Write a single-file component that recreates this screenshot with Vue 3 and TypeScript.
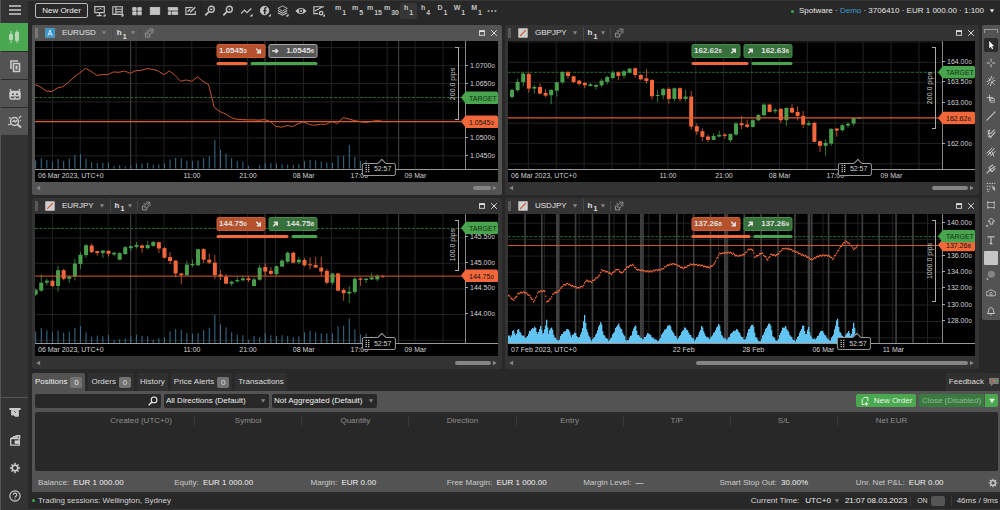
<script setup lang="ts">
import { ref } from 'vue'

type Candle = [string, number, number, number, number]
interface Mark { at: number; text: string }
interface Chart {
  symbol: string
  active?: boolean
  width: number
  top: number
  bottom: number
  start: number
  line?: number[]
  candles?: Candle[]
  volume?: number[]
  dots?: [number, number][]
  area?: [number, number][]
  gridX: number[]
  daysX: number[]
  wideX: number[]
  gridY: number[]
  prices: Mark[]
  times: Mark[]
  target: number
  last: number
  lastText: string
  pips: string
  pipsFrom: number
  pipsTo: number
  clock: number
  bid: string
  ask: string
  bidTone: string
  askTone: string
  bidIcon: string
  askIcon: string
  share: number
  thumbFrom: number
}

/* Plot units: three per pixel at the default window size. */
const STEP = 16.8

const icons: Record<string, string> = {
  menu: '<path d="M1 3h12M1 7h12M1 11h12" stroke-width="1.4"/>',
  candles: '<path d="M4 1v12M10 0v13" stroke-width="1"/><rect x="2" y="4" width="4" height="6" rx="1" fill="currentColor" stroke="none"/><rect x="8" y="2" width="4" height="9" rx="1" fill="currentColor" stroke="none"/>',
  copy: '<path d="M3 10V2h7" stroke-width="1.6"/><path d="M5.500 4.500h6v8h-6z" stroke-width="1.6"/><path d="M8.500 6.500v4" stroke-width="2"/>',
  bot: '<rect x="2" y="4.500" width="10" height="7.500" rx="1.5" stroke-width="1.5"/><path d="M2 5h10v4.500H2z" fill="currentColor" stroke="none"/><path d="M3 4L2 2M11 4l1-2M6 10.800h2" stroke-width="1.3"/><path d="M4 7.300h2M8 7.300h2" stroke="#535353" stroke-width="1.5"/>',
  analyze: '<circle cx="6.500" cy="6.500" r="4" stroke-width="1.500"/><path d="M9.500 9.500l3.500 3" stroke-width="2"/><path d="M0 10l3-1M4.500 7l1.500-1.500L7.500 7 9 5M11 3l2-2M1 3h1.500" stroke-width="1.300"/><path d="M12.500 5v1"/>',
  atm: '<path d="M0.500 3.500h13" stroke-width="2.400"/><path d="M3 5h8v7H7l-1-1.500H3z" fill="currentColor"/><path d="M6 6l2 2" stroke="#333"/>',
  wallet: '<path d="M2.500 5L9 2h3.500v3M2 5.500h10V13H2z" stroke-width="1.5"/><path d="M7 8h5v3H7z" fill="currentColor"/><path d="M5 3.500h6" stroke-width="2"/>',
  gear: '<circle cx="7" cy="7" r="3.200" stroke-width="1.800"/><path d="M7 1v2.500M7 10.500V13M1 7h2.500M10.500 7H13M2.800 2.800l1.700 1.700M9.500 9.500l1.700 1.700M2.800 11.200l1.700-1.700M9.500 4.500l1.700-1.700" stroke-width="1.700"/>',
  help: '<circle cx="7" cy="7" r="6" stroke-width="1.300"/><path d="M5 5.600a2 2 0 1 1 2.700 1.900c-.6.3-.7.600-.7 1.300M7 10v1.200" stroke-width="1.300"/>',
  monitor: '<path d="M1 2h11v7H1zM6.500 9v3M3 12.500h6" stroke-width="1.400"/><path d="M3 6l5-2 2 2"/><path d="M13 11v2h-2z" fill="currentColor"/>',
  list: '<path d="M1 2h11v9H1zM4.500 2v9M4.500 5H12M4.500 8H12" stroke-width="1.300"/><path d="M13 11v2h-2z" fill="currentColor"/>',
  four: '<path d="M2 3h4v3.500H2zM8 3h4v3.500H8zM2 8h4v3.500H2zM8 8h4v3.500H8z" fill="currentColor"/>',
  one: '<rect x="1.500" y="3" width="11" height="8" fill="currentColor"/>',
  three: '<path d="M1.500 3h11v3h-11zM1.500 8h3v3h-3zM6 8h6.500v3H6z" fill="currentColor"/>',
  edit: '<path d="M9 3H1v8h11V7" stroke-width="1.300"/><path d="M6 8.500l6-6M3 8l3-3" stroke-width="1.700"/>',
  zoomOut: '<circle cx="8.500" cy="5" r="3.500" stroke-width="1.600"/><path d="M5.500 8L1.500 12" stroke-width="2"/><path d="M7 5h3" stroke-width="1.500"/>',
  zoomIn: '<circle cx="8.500" cy="5" r="3.500" stroke-width="1.600"/><path d="M5.500 8L1.500 12" stroke-width="2"/><path d="M8.500 4v2" stroke-width="1.200"/>',
  trend: '<path d="M0 10l4-4 3 3 5-5" stroke-width="1.500"/><path d="M13 11v2h-2z" fill="currentColor"/>',
  fx: '<circle cx="6.500" cy="6.500" r="5" fill="currentColor"/><path d="M9 3.500c-2-1-2.300.500-2.300 2v5M5 6.500h4" stroke="#282828" stroke-width="1.600"/><path d="M13.500 11v2h-2z" fill="currentColor"/>',
  layers: '<path d="M6.500 1L12 4 6.500 7 1 4z"/><path d="M1 6.500l5.500 3 5.500-3M1 9l5.500 3L12 9" stroke-width="1.200"/><path d="M13 11v2h-2z" fill="currentColor"/>',
  eye: '<path d="M1 7c3-4 9-4 12 0-3 4-9 4-12 0z" fill="currentColor"/><circle cx="7" cy="7" r="1.900" fill="none" stroke="#282828" stroke-width="1.300"/>',
  screenGear: '<path d="M12 3V2H1v8h5M2 7l4-2 5-3" stroke-width="1.300"/><circle cx="9.500" cy="9.500" r="2" stroke-width="1.600"/><path d="M14 11v2h-2z" fill="currentColor"/>',
  more: '<path d="M2 6h2v2H2zM6 6h2v2H6zM10 6h2v2h-2z" fill="currentColor" stroke="none"/>',
  autochart: '<rect x="1" y="1" width="12" height="12" fill="#3b93c4" stroke="#55b4e8"/><path d="M4 11l3-8 3 8M5 8.500h4" stroke="#dff2ff" stroke-width="1.300"/>',
  chartType: '<rect x="1" y="1" width="12" height="12" fill="#cfcfcf" stroke="#cfcfcf"/><path d="M3 11l8-8" stroke="#d0532b" stroke-width="1.600"/>',
  link: '<path d="M6 4H3.500M2 7v5.500h6V9M2 7h3" stroke-width="1.300"/><circle cx="8" cy="6.500" r="2.500"/><path d="M7 1.500h5.500v6M10 4l2-2" stroke-width="1.200"/><path d="M4 8l2 2"/>',
  max: '<rect x="2.500" y="3" width="9" height="8" stroke-width="1.500"/><path d="M2.500 4h9" stroke-width="2.500"/>',
  close: '<path d="M2 2l10 10M12 2L2 12" stroke-width="1.600"/>',
  search: '<circle cx="8.500" cy="5.500" r="4" stroke-width="1.500"/><path d="M5.500 8.500L1 13" stroke-width="1.800"/>',
  order: '<path d="M6 12H3V5l3-3h5v5" stroke-width="1.400"/><path d="M9 8.500v5M6.500 11h5" stroke-width="1.600"/>',
  chat: '<path d="M1 2h12v7H6l-3 3V9H1z" fill="#777" stroke="#999"/><path d="M3 5.500h2" stroke="#e04a2a" stroke-width="2.400"/><path d="M6 5.500h2" stroke="#e8883a" stroke-width="2.400"/><path d="M9.500 5.500h2" stroke="#3fae49" stroke-width="2.400"/>',
  up: '<path d="M3 11l6-6M4 4h6v6" stroke-width="2.600"/>',
  down: '<path d="M3 3l6 6M10 4v6H4" stroke-width="2.600"/>',
  flat: '<path d="M1 7h9M7 3.500L11 7l-4 3.500" stroke-width="2.400"/>',
  cursor: '<path d="M4.500 1.500v10l2.300-2 1.700 3.500 1.500-.8-1.600-3.400h3z" fill="currentColor" stroke="none"/>',
  cross: '<path d="M7 1v4.500M7 8.500V13M1 7h4.500M8.500 7H13" stroke-width="1.300"/>',
  crossAxes: '<path d="M8 0L6 6 1 8M6 14l2-6 5-2M3 3l3 3M8 8l4 4M2 12l3-3M9 5l2-3" stroke-width="1.300"/>',
  crossBox: '<path d="M5 1v9M1 5h9" stroke-width="1.300"/><rect x="6.500" y="6.500" width="5" height="5"/><path d="M7 9h4"/>',
  slash: '<path d="M1 13L13 1" stroke-width="1.600"/>',
  channel: '<path d="M2 3l3-1-2 5 4-1 5-5M3 11l2-2 1 3 7-8" stroke-width="1.500"/>',
  fib: '<path d="M1 9l8-8M2 12L12 2M6 13l7-7M8 6l3 7M4 6l3 5" stroke-width="1.400"/>',
  pitch: '<path d="M1 13l6-6M4 5l6-4M6 8l7-5M8 11l5-5M4 5l4 6" stroke-width="1.500"/>',
  gridTool: '<path d="M1 2h12M1 6h9M1 10h5M2 13h3" stroke-dasharray="2 1.500" stroke-width="1.400"/><path d="M9 8l3 4V7z" fill="currentColor"/>',
  rect: '<rect x="2.500" y="3.500" width="9" height="7"/><path d="M1.500 3h2M10.500 3h2M1.500 11h2M10.500 11h2" stroke-width="2"/>',
  arrow: '<path d="M7.500 1.500L12 6H9.500v4h-4V6H3z" stroke-width="1.300"/><path d="M1 11v2h2z" fill="currentColor"/>',
  text: '<path d="M3 4V2.500h8V4M7 2.500v9M5 12h4" stroke-width="1.600"/>',
  swatch: '<rect x="0" y="0" width="14" height="14" rx="1" fill="#c6c6c6" stroke="none"/>',
  disc: '<circle cx="7.500" cy="6" r="5" fill="#858585" stroke="none"/><path d="M1 10.500v3h3z" fill="#bbb" stroke="none"/>',
  cloudEye: '<path d="M3 11a3 3 0 0 1 0-6c1-3 7-3 8 0a3 3 0 0 1 0 6z" stroke-width="1.300"/><circle cx="7" cy="8" r="1.800"/>',
  bell: '<path d="M2 10.500c2-1.500 1-6 3-7.500 1-1 3-1 4 0 2 1.500 1 6 3 7.500zM6 12.500h2" stroke-width="1.400"/>',
  caret: '<path d="M2 3h10l-5 8z" fill="currentColor" stroke="none"/>',
}

const every = (from: number, count: number, gap: number) =>
  Array.from({ length: count }, (_, i) => from + i * gap)

const gbpCandles: Candle[] = [
  ['u', 267, 270, 291, 296], ['u', 236, 246, 271, 275], ['u', 217, 221, 246, 259], ['d', 217, 222, 266, 278],
  ['u', 255, 261, 266, 281], ['d', 250, 261, 281, 284], ['d', 268, 279, 287, 292], ['u', 268, 270, 286, 313],
  ['u', 246, 247, 272, 290], ['u', 213, 216, 247, 252], ['d', 213, 217, 228, 236], ['d', 228, 229, 246, 250],
  ['d', 240, 242, 252, 257], ['d', 246, 249, 256, 265], ['u', 249, 253, 258, 260], ['u', 253, 255, 260, 269],
  ['u', 236, 242, 256, 262], ['u', 227, 231, 246, 254], ['u', 212, 218, 234, 238], ['d', 214, 217, 228, 241],
  ['u', 209, 214, 227, 236], ['u', 204, 206, 218, 221], ['d', 203, 205, 225, 233], ['d', 222, 225, 238, 241],
  ['d', 207, 235, 243, 251], ['d', 238, 240, 289, 299], ['u', 271, 285, 288, 307], ['u', 264, 267, 286, 298],
  ['d', 262, 267, 297, 311], ['u', 263, 265, 297, 304], ['d', 262, 265, 297, 305], ['u', 269, 290, 297, 305],
  ['d', 273, 290, 380, 389], ['d', 371, 379, 395, 405], ['d', 386, 394, 411, 424], ['d', 404, 410, 420, 427],
  ['u', 400, 408, 420, 421], ['u', 392, 405, 410, 412], ['d', 400, 404, 408, 416], ['u', 401, 402, 421, 427],
  ['u', 366, 371, 404, 408], ['d', 348, 370, 376, 388], ['d', 359, 374, 381, 384], ['u', 358, 361, 381, 383],
  ['u', 342, 345, 361, 364], ['u', 310, 314, 346, 349], ['d', 311, 314, 336, 338], ['u', 325, 330, 334, 341],
  ['d', 325, 327, 361, 369], ['u', 322, 324, 361, 379], ['d', 313, 324, 338, 341], ['d', 319, 336, 348, 362],
  ['d', 333, 348, 374, 384], ['u', 362, 370, 375, 378], ['d', 365, 369, 426, 427], ['d', 422, 424, 438, 456],
  ['u', 419, 429, 438, 468], ['u', 385, 387, 431, 438], ['d', 385, 386, 392, 410], ['u', 373, 376, 391, 395],
  ['u', 366, 372, 377, 383], ['u', 352, 355, 371, 378], ['u', 353, 354, 356, 357],
]

const eurjpyCandles: Candle[] = [
  ['u', 297, 301, 315, 320], ['u', 254, 279, 303, 307], ['u', 267, 273, 279, 287], ['d', 269, 273, 289, 292],
  ['u', 227, 241, 289, 306], ['d', 237, 241, 267, 272], ['u', 258, 261, 267, 280], ['u', 206, 221, 260, 272],
  ['u', 185, 194, 222, 238], ['u', 162, 165, 195, 203], ['d', 160, 166, 186, 189], ['d', 182, 183, 189, 197],
  ['u', 180, 181, 189, 204], ['d', 180, 182, 191, 200], ['u', 185, 188, 193, 198], ['u', 186, 189, 209, 211],
  ['u', 167, 171, 192, 194], ['u', 165, 168, 174, 182], ['u', 155, 164, 170, 175], ['d', 162, 166, 173, 188],
  ['u', 152, 164, 174, 178], ['u', 153, 155, 167, 170], ['d', 154, 156, 175, 189], ['d', 171, 174, 203, 205],
  ['d', 186, 201, 213, 222], ['d', 210, 212, 251, 263], ['d', 249, 251, 256, 284], ['u', 212, 224, 256, 258],
  ['u', 208, 222, 226, 231], ['u', 176, 177, 226, 227], ['d', 174, 177, 209, 219], ['d', 191, 209, 218, 222],
  ['d', 195, 218, 256, 268], ['d', 241, 254, 260, 271], ['d', 253, 261, 282, 284], ['u', 273, 276, 282, 290],
  ['u', 261, 271, 275, 279], ['u', 257, 266, 272, 273], ['d', 260, 266, 271, 277], ['u', 263, 269, 289, 291],
  ['u', 225, 233, 270, 273], ['d', 220, 231, 245, 258], ['d', 232, 243, 252, 256], ['u', 226, 229, 253, 258],
  ['u', 207, 212, 230, 231], ['u', 184, 188, 215, 219], ['d', 184, 188, 218, 220], ['u', 201, 209, 217, 222],
  ['d', 204, 210, 226, 230], ['d', 202, 223, 226, 239], ['d', 201, 225, 233, 234], ['d', 200, 233, 245, 258],
  ['d', 237, 243, 279, 284], ['u', 249, 251, 279, 286], ['d', 249, 251, 303, 306], ['d', 296, 301, 311, 334],
  ['u', 289, 306, 312, 341], ['u', 262, 267, 307, 313], ['d', 263, 266, 270, 289], ['u', 264, 267, 271, 280],
  ['u', 249, 263, 269, 271], ['u', 253, 258, 269, 275], ['d', 255, 260, 262, 265],
]

const shortTimes: Mark[] = [
  { at: 471, text: '11:00' }, { at: 639, text: '21:00' }, { at: 806, text: '08 Mar' }, { at: 973, text: '17:00' }, { at: 1141, text: '09 Mar' },
]

const charts: Chart[] = [
  {
    symbol: 'EURUSD', active: true, width: 1290, top: 123, bottom: 506, start: 0,
    line: [254, 261, 273, 275, 264, 260, 247, 231, 219, 205, 214, 226, 224, 224, 216, 217, 213, 220, 212, 211, 206, 208, 213, 224, 213, 226, 244, 240, 244, 231, 244, 254, 322, 335, 342, 353, 358, 359, 360, 360, 361, 359, 365, 379, 382, 377, 380, 371, 366, 374, 376, 373, 373, 365, 371, 353, 357, 362, 365, 368, 365, 362, 364],
    volume: [482, 475, 481, 485, 477, 484, 476, 465, 463, 477, 487, 490, 489, 488, 499, 496, 499, 496, 491, 491, 489, 495, 494, 490, 479, 474, 475, 483, 484, 482, 475, 469, 420, 450, 461, 475, 484, 486, 498, 506, 497, 490, 490, 491, 493, 495, 495, 493, 484, 480, 482, 485, 488, 489, 468, 468, 436, 471, 484, 482],
    gridX: every(52, 15, 83.700), daysX: [287, 690, 1091], wideX: [], gridY: [143, 197, 251, 306, 360, 414, 468],
    prices: [{ at: 197, text: '1.07000' }, { at: 251, text: '1.06500' }, { at: 414, text: '1.05000' }, { at: 468, text: '1.04500' }],
    times: shortTimes, target: 293, last: 365, lastText: '1.05453', pips: '200.0 pips', pipsFrom: 142, pipsTo: 360, clock: 1041,
    bid: '1.05453', ask: '1.05456', bidTone: 'sell', askTone: 'idle', bidIcon: 'down', askIcon: 'flat', share: 31, thumbFrom: 96,
  },
  {
    symbol: 'GBPJPY', width: 1302, top: 123, bottom: 506, start: 12, candles: gbpCandles,
    gridX: every(61, 15, 83.700), daysX: [], wideX: [], gridY: [126, 187, 247, 309, 370, 431, 492],
    prices: [{ at: 187, text: '164.000' }, { at: 247, text: '163.500' }, { at: 309, text: '163.000' }, { at: 431, text: '162.000' }],
    times: shortTimes.map((t) => ({ at: t.at + 9, text: t.text })), target: 217, last: 354, lastText: '162.626', pips: '200.0 pips', pipsFrom: 142, pipsTo: 386, clock: 1050,
    bid: '162.626', ask: '162.636', bidTone: 'buy', askTone: 'buy', bidIcon: 'up', askIcon: 'up', share: 57, thumbFrom: 92,
  },
  {
    symbol: 'EURJPY', width: 1290, top: 70, bottom: 464, start: 2, candles: eurjpyCandles,
    volume: [427, 417, 424, 430, 424, 431, 428, 417, 411, 430, 443, 440, 442, 438, 454, 451, 449, 441, 437, 441, 442, 453, 448, 445, 427, 420, 423, 432, 434, 432, 423, 416, 377, 406, 415, 430, 437, 439, 453, 441, 445, 432, 439, 441, 439, 441, 445, 442, 430, 425, 430, 433, 433, 433, 412, 410, 388, 421, 436, 434, 443],
    gridX: every(52, 15, 83.700), daysX: [287, 690, 1091], wideX: [], gridY: [143, 220, 298, 376, 454],
    prices: [{ at: 143, text: '145.500' }, { at: 220, text: '145.000' }, { at: 298, text: '144.500' }, { at: 376, text: '144.000' }],
    times: shortTimes, target: 114, last: 259, lastText: '144.750', pips: '100.0 pips', pipsFrom: 89, pipsTo: 244, clock: 1041,
    bid: '144.750', ask: '144.758', bidTone: 'sell', askTone: 'buy', bidIcon: 'down', askIcon: 'up', share: 72, thumbFrom: 92,
  },
  {
    symbol: 'USDJPY', width: 1302, top: 70, bottom: 464, start: 0,
    dots: [[2, 318], [16, 330], [31, 312], [51, 310], [66, 318], [78, 335], [91, 308], [111, 306], [116, 338], [128, 325], [136, 310], [151, 308], [166, 288], [179, 280], [191, 286], [211, 298], [226, 290], [234, 270], [251, 275], [273, 262], [281, 241], [296, 243], [311, 252], [328, 240], [341, 250], [356, 230], [374, 225], [386, 242], [406, 240], [431, 246], [456, 240], [476, 226], [501, 224], [526, 233], [546, 226], [581, 224], [604, 235], [616, 228], [634, 188], [646, 187], [676, 192], [686, 196], [711, 192], [721, 180], [734, 180], [740, 200], [761, 187], [779, 212], [788, 195], [806, 193], [823, 177], [846, 178], [866, 183], [881, 195], [911, 208], [926, 198], [966, 198], [974, 205], [991, 180], [1013, 154], [1026, 160], [1038, 176], [1050, 166]],
    area: [[0, 440], [10, 442], [16, 415], [22, 440], [31, 418], [40, 440], [55, 450], [66, 422], [81, 411], [90, 440], [97, 412], [106, 442], [116, 394], [122, 432], [130, 408], [140, 445], [152, 460], [160, 440], [181, 415], [190, 442], [200, 430], [212, 452], [222, 430], [230, 377], [236, 420], [250, 455], [264, 440], [279, 398], [286, 436], [304, 454], [318, 432], [331, 406], [345, 430], [356, 455], [370, 440], [382, 408], [388, 438], [404, 450], [421, 430], [436, 452], [452, 458], [466, 425], [484, 406], [496, 436], [510, 452], [522, 425], [532, 412], [546, 440], [560, 458], [572, 436], [582, 406], [592, 440], [606, 454], [620, 430], [633, 400], [642, 440], [658, 456], [674, 430], [688, 418], [700, 440], [712, 456], [722, 425], [735, 404], [742, 440], [756, 458], [772, 425], [786, 402], [794, 440], [808, 456], [823, 418], [833, 416], [846, 440], [862, 456], [876, 430], [886, 408], [894, 446], [901, 414], [910, 446], [924, 448], [941, 425], [954, 446], [966, 456], [978, 430], [988, 383], [994, 428], [1008, 452], [1021, 425], [1030, 440], [1037, 397], [1044, 440], [1056, 455]],
    gridX: every(109, 12, 104.500), daysX: every(51, 24, 50.600), wideX: [148, 400, 652, 903], gridY: [98, 148, 198, 247, 297, 347, 397, 447],
    prices: [{ at: 98, text: '140.000' }, { at: 198, text: '136.000' }, { at: 247, text: '134.000' }, { at: 297, text: '132.000' }, { at: 347, text: '130.000' }, { at: 397, text: '128.000' }],
    times: [{ at: 527, text: '22 Feb' }, { at: 736, text: '28 Feb' }, { at: 946, text: '06 Mar' }, { at: 1156, text: '11 Mar' }],
    target: 139, last: 166, lastText: '137.268', pips: '1000.0 pips', pipsFrom: 89, pipsTo: 340, clock: 1048,
    bid: '137.268', ask: '137.269', bidTone: 'sell', askTone: 'buy', bidIcon: 'down', askIcon: 'up', share: 59, thumbFrom: 40,
  },
]

const AXIS = 33
const plotX = (c: Chart, i: number) => c.start + i * STEP
const pct = (c: Chart, y: number) => ((y - c.top) / (c.bottom - c.top)) * 100 + '%'
/* The time strip spans the price axis too, so its marks skip that column. */
const pctX = (c: Chart, x: number) => `calc((100% - ${AXIS}px) * ${x / c.width})`
const linePoints = (c: Chart) => (c.line ?? []).map((y, i) => `${plotX(c, i)},${y}`).join(' ')

function sample(points: [number, number][], x: number): number {
  const k = Math.max(1, points.findIndex((p) => p[0] >= x))
  const a = points[k - 1]
  const b = points[k]
  return a[1] + ((b[1] - a[1]) * (x - a[0])) / (b[0] - a[0])
}
const wobble = (i: number) => Math.sin(i * 12.9) * 3 + Math.sin(i * 4.100) * 2

function dotPath(c: Chart): string {
  return every(2, 350, 3).map((x, i) => `M${x} ${(sample(c.dots!, x) + wobble(i) * 0.8 - 2).toFixed(0)}v4`).join('')
}
function areaPath(c: Chart): string {
  return every(2, 352, 3).map((x, i) => {
    const y = Math.min(461, sample(c.area!, x) + wobble(i))
    return `M${x} ${c.bottom}V${y.toFixed(0)}`
  }).join('')
}

const railTop = ['copy', 'bot', 'analyze']
const railBottom = ['atm', 'wallet', 'gear', 'help']
const toolGroups = [['monitor', 'list'], ['four', 'one', 'three', 'edit'], ['zoomOut', 'zoomIn'], ['trend', 'fx', 'layers', 'eye', 'screenGear']]
const frames = [['m', '1'], ['m', '5'], ['m', '15'], ['m', '30'], ['h', '1'], ['h', '4'], ['D', '1'], ['W', '1'], ['M', '1']]
const drawTools = ['cursor', 'cross', 'crossAxes', 'crossBox', 'slash', 'channel', 'fib', 'pitch', 'gridTool', 'rect', 'arrow', 'text', 'swatch', 'disc', 'cloudEye', 'bell']
const tabs = [
  { name: 'Positions', count: '0' }, { name: 'Orders', count: '0' }, { name: 'History' }, { name: 'Price Alerts', count: '0' }, { name: 'Transactions' },
]
const activeTab = ref('Positions')
const columns = ['Created (UTC+0)', 'Symbol', 'Quantity', 'Direction', 'Entry', 'T/P', 'S/L', 'Net EUR']
const totals = [
  ['Balance:', 'EUR 1 000.00'], ['Equity:', 'EUR 1 000.00'], ['Margin:', 'EUR 0.00'], ['Free Margin:', 'EUR 1 000.00'],
  ['Margin Level:', '—'], ['Smart Stop Out:', '30.00%'], ['Unr. Net P&L:', 'EUR 0.00'],
]
const query = ref('')
</script>

<template>
  <div class="app">
    <nav class="rail" aria-label="Main">
      <button class="rail-btn menu" aria-label="Menu"><svg class="ic14" viewBox="0 0 14 14" v-html="icons.menu" /></button>
      <button class="rail-btn current" aria-label="Trade"><svg class="ic14" viewBox="0 0 14 14" v-html="icons.candles" /></button>
      <button v-for="n in railTop" :key="n" class="rail-btn app-btn" :aria-label="n"><svg class="ic14" viewBox="0 0 14 14" v-html="icons[n]" /></button>
      <div class="rail-foot">
        <button v-for="n in railBottom" :key="n" class="rail-btn" :aria-label="n"><svg class="ic12" viewBox="0 0 14 14" v-html="icons[n]" /></button>
      </div>
    </nav>

    <div class="main">
      <header class="toolbar">
        <button class="new-order">New Order</button>
        <div v-for="(g, gi) in toolGroups" :key="gi" class="tool-group">
          <button v-for="n in g" :key="n" class="tool" :aria-label="n"><svg class="ic12" viewBox="0 0 14 14" v-html="icons[n]" /></button>
        </div>
        <div class="frames">
          <button v-for="f in frames" :key="f.join('')" class="frame" :class="{ on: f.join('') === 'h1' }">
            <span>{{ f[0] }}</span><sub>{{ f[1] }}</sub>
          </button>
        </div>
        <button class="more" aria-label="More"><svg class="ic12" viewBox="0 0 14 14" v-html="icons.more" /></button>
        <button class="account">
          <i class="live" />
          <span>Spotware · <em>Demo</em> · 3706410 · EUR 1 000.00 · 1:100</span>
          <svg class="ic6" viewBox="0 0 14 14" v-html="icons.caret" />
        </button>
      </header>

      <div class="desk">
        <div class="charts">
          <section v-for="c in charts" :key="c.symbol" class="panel" :class="{ active: c.active }">
            <header class="head">
              <i class="grip" />
              <button class="mini type" aria-label="Chart type"><svg class="ic10" viewBox="0 0 14 14" v-html="c.active ? icons.autochart : icons.chartType" /></button>
              <button class="mini symbol">{{ c.symbol }}<svg class="ic6 dim" viewBox="0 0 14 14" v-html="icons.caret" /></button>
              <button class="mini period"><span>h</span><sub>1</sub><svg class="ic6 dim" viewBox="0 0 14 14" v-html="icons.caret" /></button>
              <button class="mini link" aria-label="Link"><svg class="ic10" viewBox="0 0 14 14" v-html="icons.link" /></button>
              <button class="mini push" aria-label="Maximize"><svg class="ic8" viewBox="0 0 14 14" v-html="icons.max" /></button>
              <button class="mini" aria-label="Close"><svg class="ic8" viewBox="0 0 14 14" v-html="icons.close" /></button>
            </header>

            <div class="chart">
              <div class="plot">
                <svg class="canvas" :viewBox="`0 ${c.top} ${c.width} ${c.bottom - c.top}`" preserveAspectRatio="none">
                  <path class="grid" :d="c.gridX.map((x) => `M${x} 0V600`).join('') + c.gridY.map((y) => `M0 ${y}H${c.width}`).join('')" />
                  <path class="days" :class="{ dense: c.area }" :d="c.daysX.map((x) => `M${x} 0V600`).join('')" />
                  <path class="wide" :d="c.wideX.map((x) => `M${x} 0V600`).join('')" />
                  <path v-if="c.volume" class="volume" :d="c.volume.map((y, i) => `M${i * STEP + 2} ${c.bottom}V${y}`).join('')" />
                  <path v-if="c.area" class="area" :d="areaPath(c)" />
                  <path class="target-line" :d="`M0 ${c.target}H${c.width}`" />
                  <polyline v-if="c.line" class="series" :points="linePoints(c)" />
                  <path v-if="c.dots" class="ticks" :d="dotPath(c)" />
                  <g v-for="(k, i) in c.candles ?? []" :key="i" :class="k[0]">
                    <rect :x="plotX(c, i) - 1.5" :y="k[1]" width="3" :height="k[4] - k[1]" opacity="0.75" />
                    <rect :x="plotX(c, i) - 6" :y="k[2]" width="12" :height="k[3] - k[2]" />
                  </g>
                  <path class="last-line" :class="{ thin: c.area || c.symbol === 'EURJPY' }" :d="`M0 ${c.last}H${c.width}`" />
                </svg>
                <div class="pips" :style="{ top: pct(c, c.pipsFrom), height: `calc(${pct(c, c.pipsTo)} - ${pct(c, c.pipsFrom)})` }"><span>{{ c.pips }}</span></div>
              </div>
              <div class="prices">
                <span v-for="p in c.prices" :key="p.text" class="price" :style="{ top: pct(c, p.at) }">{{ p.text.slice(0, -1) }}<small>{{ p.text.slice(-1) }}</small></span>
                <span class="tag sell" :style="{ top: pct(c, c.last) }">{{ c.lastText.slice(0, -1) }}<small>{{ c.lastText.slice(-1) }}</small></span>
                <span class="tag buy" :style="{ top: pct(c, c.target) }">TARGET</span>
              </div>
              <div class="times">
                <span class="origin">{{ c.area ? '07 Feb' : '06 Mar' }} 2023, UTC+0</span>
                <span v-for="t in c.times" :key="t.text" class="time" :style="{ left: pctX(c, t.at) }">{{ t.text }}</span>
                <span class="clock" :style="{ left: pctX(c, c.clock) }"><svg viewBox="0 0 6 12"><path d="M1 1v10M4 1v10" stroke="#ccc" stroke-width="1.5" stroke-dasharray="1.500 1" /></svg>52:57</span>
              </div>
              <div class="quick">
                <button class="quote" :class="c.bidTone"><b>{{ c.bid.slice(0, -1) }}<small>{{ c.bid.slice(-1) }}</small></b><svg class="ic8" viewBox="0 0 14 14" v-html="icons[c.bidIcon]" /></button>
                <button class="quote" :class="c.askTone"><svg class="ic8" viewBox="0 0 14 14" v-html="icons[c.askIcon]" /><b>{{ c.ask.slice(0, -1) }}<small>{{ c.ask.slice(-1) }}</small></b></button>
                <div class="mood"><i class="bears" :style="{ flexGrow: c.share }" /><i class="bulls" :style="{ flexGrow: 97 - c.share }" /></div>
              </div>
            </div>

            <div class="scroll">
              <svg class="ic6" viewBox="0 0 14 14"><path d="M12 2v10L3 7z" fill="currentColor" /></svg>
              <div class="track"><i :style="{ marginLeft: c.thumbFrom + '%' }" /></div>
              <svg class="ic6" viewBox="0 0 14 14"><path d="M2 2v10l9-5z" fill="currentColor" /></svg>
            </div>
          </section>
        </div>

        <aside class="draw" aria-label="Drawing tools">
          <i class="draw-grip" />
          <button v-for="n in drawTools" :key="n" class="draw-btn" :class="{ on: n === 'cursor' }" :aria-label="n">
            <svg :class="n === 'swatch' ? 'ic14' : 'ic10'" viewBox="0 0 14 14" v-html="icons[n]" />
          </button>
        </aside>
      </div>

      <section class="trade">
        <div class="tabs">
          <button v-for="t in tabs" :key="t.name" class="tab" :class="{ on: t.name === activeTab }" @click="activeTab = t.name">
            {{ t.name }}<b v-if="t.count">{{ t.count }}</b>
          </button>
          <button class="tab feedback">Feedback<svg class="ic10" viewBox="0 0 14 14" v-html="icons.chat" /></button>
        </div>
        <div class="sheet">
          <div class="filters">
            <label class="field search"><input v-model="query" type="text" aria-label="Search positions" /><svg class="ic10" viewBox="0 0 14 14" v-html="icons.search" /></label>
            <label class="field"><select aria-label="Direction"><option>All Directions (Default)</option></select><svg class="ic6 dim" viewBox="0 0 14 14" v-html="icons.caret" /></label>
            <label class="field"><select aria-label="Aggregation"><option>Not Aggregated (Default)</option></select><svg class="ic6 dim" viewBox="0 0 14 14" v-html="icons.caret" /></label>
            <button class="act"><svg class="ic10" viewBox="0 0 14 14" v-html="icons.order" />New Order</button>
            <div class="split">
              <button class="act off" disabled>Close (Disabled)</button>
              <button class="act drop" aria-label="Close options"><svg class="ic8" viewBox="0 0 14 14" v-html="icons.caret" /></button>
            </div>
          </div>
          <div class="grid-box">
            <table>
              <thead><tr><td class="lead" /><th v-for="h in columns" :key="h" scope="col">{{ h }}</th><td class="lead" /></tr></thead>
            </table>
          </div>
          <div class="totals">
            <div v-for="t in totals" :key="t[0]">{{ t[0] }} <strong>{{ t[1] }}</strong></div>
            <button class="mini" aria-label="Settings"><svg class="ic10" viewBox="0 0 14 14" v-html="icons.gear" /></button>
          </div>
        </div>
      </section>

      <footer class="status">
        <i class="live" /><span>Trading sessions: Wellington, Sydney</span>
        <span class="now">Current Time:</span>
        <button class="mini zone">UTC+0<svg class="ic6 dim" viewBox="0 0 14 14" v-html="icons.caret" /></button>
        <span class="stamp">21:07 08.03.2023</span>
        <label class="switch">ON<input type="checkbox" aria-label="Sound" /></label>
        <span class="ping">46ms / 9ms</span>
      </footer>
    </div>
  </div>
</template>

<style>
body { background: #282828; }
</style>

<style scoped>
* { box-sizing: border-box; }
.app {
  display: grid;
  grid-template-columns: 28px minmax(0, 1fr);
  height: 100vh;
  overflow: hidden;
  background: #282828;
  color: #dcdcdc;
  font: 8px/10px "Liberation Sans", Arial, sans-serif;
}
button, input, select { font: inherit; color: inherit; background: none; border: 0; padding: 0; margin: 0; }
svg { display: block; flex: none; fill: none; stroke: currentColor; }
.ic14 { width: 14px; height: 14px; }
.ic12 { width: 12px; height: 12px; }
.ic10 { width: 10px; height: 10px; }
.ic8 { width: 8px; height: 8px; }
.ic6 { width: 6px; height: 6px; stroke: none; }
.dim { color: #858585; }
small { font-size: 6px; }

.rail { display: flex; flex-direction: column; background: #333; border-left: 1px solid #555; }
.rail-btn { display: flex; align-items: center; justify-content: center; height: 28px; color: #ccc; }
.rail-btn.menu { height: 23px; padding-bottom: 4px; }
.rail-btn.current { margin-left: -1px; background: #4aa850; color: #b9d8ba; }
.rail-btn.app-btn { background: #535353; border-top: 1px solid #2d2d2d; }
.rail-foot { margin-top: auto; border-top: 1px solid #555; }
.rail-foot .rail-btn { width: 100%; }

.main { display: flex; flex-direction: column; min-width: 0; border-top: 1px solid #363636; }
.toolbar { display: flex; align-items: flex-start; height: 24px; padding: 2px 5px 0 7px; color: #c4c4c4; flex: none; }
.new-order { width: 53px; height: 15px; border: 1px solid #bbb; border-radius: 2px; color: #eee; margin-right: 3px; }
.tool-group { display: flex; }
.tool-group + .tool-group { border-left: 1px solid #222; }
.tool { display: flex; width: 18px; height: 16px; align-items: center; justify-content: center; }
.frames { display: flex; margin-left: 4px; }
.frame { display: flex; width: 17px; height: 16px; justify-content: center; font-weight: bold; font-size: 7px; line-height: 10px; border-radius: 2px; }
.frame.on { background: #363636; }
.frame sub { font-size: 7px; line-height: 8px; margin: 6px 0 0 1px; vertical-align: baseline; }
.more { height: 16px; margin-left: 1px; }
.account { display: flex; align-items: center; gap: 5px; height: 16px; margin-left: auto; color: #e6e6e6; }
.account em { font-style: normal; color: #3c9ccc; }
.live { width: 3px; height: 3px; border-radius: 2px; background: #3fa447; flex: none; }

.desk { flex: 1; min-height: 0; display: flex; gap: 3px; padding-left: 4px; }
.charts { flex: 1; min-width: 0; display: grid; grid-template-columns: 470fr 474fr; grid-template-rows: 170fr 172fr; gap: 3px; }
.panel { display: flex; flex-direction: column; min-width: 0; min-height: 0; padding: 0 4px 0 3px; background: #333; border-radius: 2px; }
.panel.active { background: #535353; }
.head { display: flex; align-items: center; height: 16px; flex: none; color: #e2e2e2; }
.grip { width: 3px; height: 10px; background: #5a5a5a; margin-right: 7px; }
.active .grip { background: #777; }
.mini { display: flex; align-items: center; }
.type { margin-right: 7px; }
.symbol .dim { margin-left: 5px; }
.period { margin-left: 5px; padding-left: 4px; border-left: 1px solid #4a4a4a; font-weight: bold; font-size: 8px; }
.period sub { font-size: 7px; line-height: 6px; margin: 7px 3px 0 1px; }
.link { margin-left: 4px; padding-left: 3px; border-left: 1px solid #4a4a4a; color: #999; }
.push { margin: 0 4px 0 auto; }

.chart { position: relative; flex: 1; min-height: 0; display: grid; grid-template-columns: minmax(0, 1fr) 33px; grid-template-rows: minmax(0, 1fr) 13px; background: #000; font-size: 7px; }
.plot { position: relative; min-width: 0; min-height: 0; }
.canvas { position: absolute; inset: 0; width: 100%; height: 100%; stroke: none; }
.canvas path { stroke-width: 3; }
.canvas .grid { stroke: #222; }
.canvas .days { stroke: #464646; }
.canvas .days.dense { stroke: #3e3e3e; stroke-width: 5; }
.canvas .wide { stroke: #3e3e3e; stroke-width: 8; }
.canvas .volume { stroke: #38708f; }
.canvas .area { stroke: #62c4f2; stroke-width: 4; }
.canvas .target-line { stroke: #2c6a30; stroke-dasharray: 9 4; }
.canvas .series { stroke: #c4552e; stroke-width: 3; }
.canvas .ticks { stroke: #ee6536; stroke-width: 4; }
.canvas .last-line { stroke: #d85c30; stroke-width: 4; }
.canvas .last-line.thin { stroke-width: 3; }
.u { fill: #48a04c; }
.d { fill: #f3683a; }
.pips { position: absolute; right: 6px; width: 4px; border: 1px solid #aaa; border-left: 0; }
.pips span { position: absolute; right: 0; top: 50%; writing-mode: vertical-rl; transform: translateY(-50%) rotate(180deg); white-space: nowrap; color: #ccc; }

.prices { position: relative; border-left: 1px solid #888; color: #d4d4d4; }
.price { position: absolute; left: 4px; transform: translateY(-50%); white-space: nowrap; }
.price::before { content: ""; position: absolute; left: -5px; top: 4px; width: 3px; height: 1px; background: #aaa; }
.tag { position: absolute; left: -5px; right: 0; height: 13px; line-height: 13px; padding-left: 8px; transform: translateY(-50%); white-space: nowrap; color: #111; border-radius: 2px; clip-path: polygon(0 50%, 5px 0, 100% 0, 100% 100%, 5px 100%); }
.tag.sell { background: #f3683a; }
.tag.buy { background: #48a44d; color: #0f3313; }

.times { position: relative; grid-column: 1 / -1; border-top: 1px solid #999; color: #d4d4d4; }
.origin { position: absolute; left: 3px; top: 1px; }
.time { position: absolute; top: 1px; transform: translateX(-50%); white-space: nowrap; }
.clock { position: absolute; top: -7px; transform: translateX(-60%); display: flex; align-items: center; gap: 3px; height: 13px; padding: 0 3px 0 2px; border: 1px solid #999; border-radius: 2px; background: #000; }
.clock svg { width: 6px; height: 10px; }
.clock::before { content: ""; position: absolute; left: 60%; top: -4px; margin-left: -3px; width: 5px; height: 5px; border: 1px solid #999; border-width: 1px 0 0 1px; background: #000; transform: rotate(45deg); }

.quick { position: absolute; left: 50%; top: 3px; width: 101px; transform: translateX(-50%); display: grid; grid-template-columns: 1fr 1fr; gap: 4px 3px; font-size: 8px; }
.quote { display: flex; align-items: center; justify-content: space-between; height: 14px; padding: 0 2px; border: 1px solid; border-radius: 2px; color: #e0e0e0; }
.quote.sell { background: #b3522c; border-color: #cf5c32; }
.quote.buy { background: #37703b; border-color: #43904a; }
.quote.idle { background: #555; border-color: #aaa; }
.mood { grid-column: 1 / -1; display: flex; gap: 3px; height: 3px; }
.mood i { flex-basis: 0; border-radius: 2px; }
.bears { background: #f3683a; }
.bulls { background: #48a44d; }

.scroll { display: flex; align-items: center; gap: 1px; height: 13px; flex: none; color: #888; }
.track { flex: 1; height: 4px; display: flex; }
.track i { flex: 1; border-radius: 2px; background: #858585; }

.draw { flex: none; align-self: flex-start; width: 18px; display: flex; flex-direction: column; align-items: center; padding: 4px 0 1px; background: #535353; border-radius: 2px 0 0 2px; color: #c8c8c8; }
.draw-grip { width: 14px; height: 4px; margin-bottom: 4px; border: 1px solid #999; border-bottom: 0; }
.draw-btn { display: flex; align-items: center; justify-content: center; width: 14px; height: 17px; flex: none; }
.draw-btn:not(:nth-child(3n)) { margin-top: 1px; }
.draw-btn.on { background: #2b2b2b; border-radius: 2px; color: #fff; height: 14px; margin-bottom: 2px; }

.trade { flex: none; padding-left: 4px; margin-top: 4px; }
.tabs { display: flex; gap: 3px; }
.tab { display: flex; align-items: center; gap: 3px; height: 18px; padding: 0 3px; border-radius: 2px 2px 0 0; background: #303030; color: #ddd; }
.tab.on { background: #535353; color: #f0f0f0; }
.tab b { width: 12px; height: 11px; line-height: 11px; border-radius: 2px; background: #737373; font-weight: normal; }
.feedback { margin-left: auto; gap: 5px; padding-right: 1px; }
.sheet { background: #535353; padding: 3px 2px 0 3px; }
.filters { display: flex; gap: 3px; margin-bottom: 4px; }
.field { position: relative; display: flex; align-items: center; width: 105px; height: 14px; padding: 0 3px 0 2px; background: #282828; border-radius: 2px; color: #eee; }
.field.search { width: 126px; }
.field input, .field select { flex: 1; min-width: 0; height: 14px; appearance: none; outline: 0; }
.act { display: flex; align-items: center; justify-content: center; gap: 4px; width: 60px; height: 13px; margin-left: auto; background: #4aa84e; border-radius: 2px; color: #e8f4e8; }
.act.off { width: 65px; border-radius: 2px 0 0 2px; background: #3a7a40; color: #94b897; }
.act.drop { width: 13px; border-radius: 0 2px 2px 0; }
.split { display: flex; gap: 1px; }
.grid-box { height: 59px; background: #282828; border-radius: 2px; }
table { width: 100%; table-layout: fixed; border-collapse: separate; border-spacing: 0 4px; color: #8d8d8d; }
th { height: 10px; padding: 0; font-weight: normal; text-align: center; border-right: 1px solid #3a3a3a; }
th:last-of-type { border-right: 0; }
.lead { width: 53px; padding: 0; }
.totals { display: grid; grid-template-columns: repeat(7, minmax(0, 1fr)) 6px; align-items: center; height: 21px; padding: 3px 0 0 3px; color: #ccc; white-space: nowrap; }
.totals .mini { justify-self: end; }
.totals strong { font-weight: normal; color: #f0f0f0; margin-left: 2px; }

.status { display: flex; align-items: center; flex: none; height: 18px; padding: 0 2px 0 4px; border-bottom: 1px solid #383838; color: #d4d4d4; }
.status .live { margin-right: 3px; }
.now { margin-left: auto; }
.zone { margin-left: 6px; gap: 3px; color: #eee; }
.stamp { margin-left: 5px; padding-right: 3px; border-right: 1px solid #3a3a3a; color: #eee; }
.switch { display: flex; align-items: center; gap: 3px; margin-left: 6px; padding-right: 6px; border-right: 1px solid #3a3a3a; font-size: 7px; }
.switch input { appearance: none; width: 14px; height: 10px; border-radius: 2px; background: #555; }
.ping { margin-left: 5px; }
</style>
